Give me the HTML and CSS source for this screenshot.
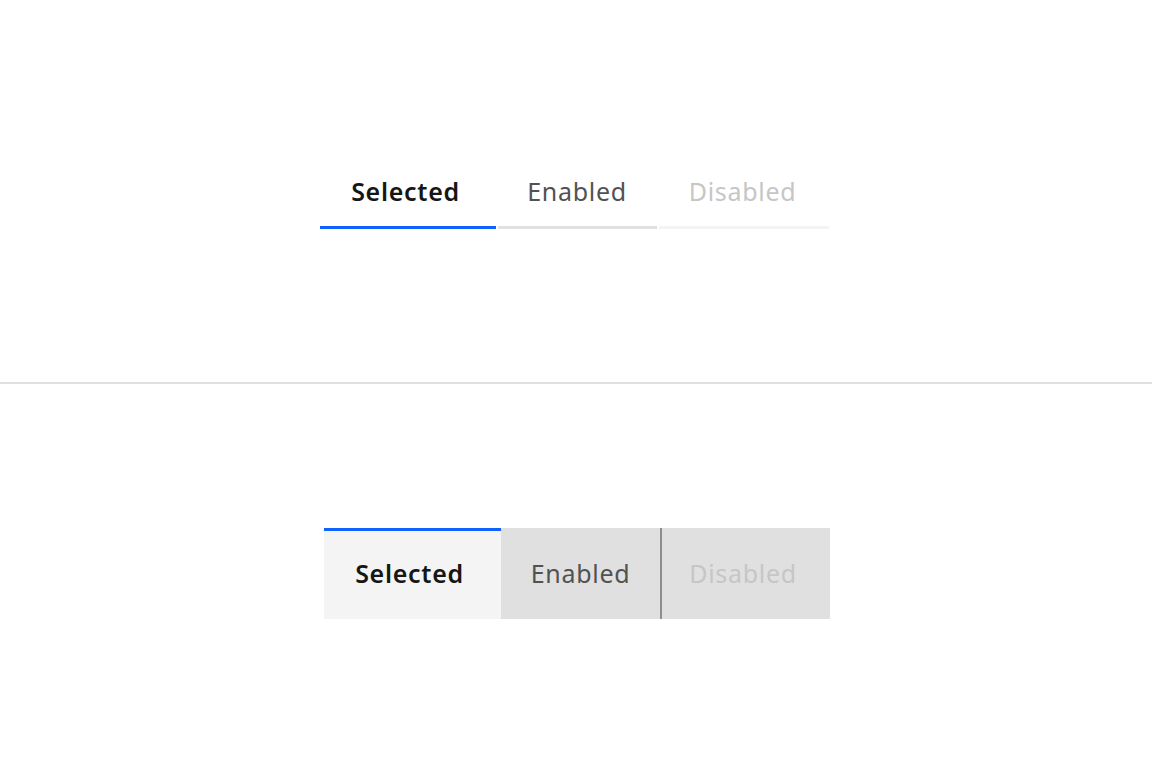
FILE: index.html
```html
<!DOCTYPE html>
<html lang="en">
<head>
  <meta charset="UTF-8">
  <title>Tabs</title>
  <link rel="stylesheet" href="styles.css">
</head>
<body>
  <section class="panel panel-top">
    <div class="tabs">
      <div class="tab tab-selected w-1">Selected</div>
      <div class="tab tab-enabled w-2">Enabled</div>
      <div class="tab tab-disabled w-3">Disabled</div>
    </div>
  </section>

  <section class="panel panel-bottom">
    <div class="tabs-contained">
      <div class="ctab ctab-selected">Selected</div>
      <div class="ctab ctab-enabled">Enabled</div>
      <div class="ctab ctab-disabled">Disabled</div>
    </div>
  </section>
</body>
</html>
```

FILE: styles.css
```css
* {
  box-sizing: border-box;
  margin: 0;
  padding: 0;
}

body {
  font-family: "Noto Sans", "Open Sans", Arial, sans-serif;
  background: #fff;
  color: #161616;
}

.panel {
  display: flex;
  justify-content: center;
  align-items: center;
  width: 100%;
}

.panel-top {
  height: 384px;
  border-bottom: 2px solid #e0e0e0;
  padding-right: 4px;
}

.panel-bottom {
  height: 381px;
  padding-left: 2px;
  padding-bottom: 2px;
}

/* Line tabs */
.tabs {
  display: flex;
  gap: 2px;
}

.tab {
  height: 76px;
  display: flex;
  align-items: center;
  justify-content: center;
  font-size: 25px;
  letter-spacing: 0.7px;
  border-bottom: 3px solid #e0e0e0;
  padding-top: 3px;
}

.w-1 { width: 176px; }
.w-2 { width: 159px; }
.w-3 { width: 170px; }

.tab-selected {
  font-weight: 600;
  color: #161616;
  border-bottom-color: #0f62fe;
  padding-right: 4px;
}

.tab-enabled {
  color: #525252;
}

.tab-disabled {
  color: #c6c6c6;
  border-bottom-color: #f4f4f4;
  padding-right: 2px;
}

/* Contained tabs */
.tabs-contained {
  display: flex;
  height: 91px;
}

.ctab {
  display: flex;
  align-items: center;
  justify-content: center;
  font-size: 25px;
  letter-spacing: 0.7px;
  background: #e0e0e0;
  padding-bottom: 2px;
}

.ctab-selected {
  width: 177px;
  background: #f4f4f4;
  border-top: 3px solid #0f62fe;
  font-weight: 600;
  color: #161616;
  padding-bottom: 4px;
  padding-right: 6px;
}

.ctab-enabled {
  width: 161px;
  color: #525252;
  border-right: 2px solid #8d8d8d;
}

.ctab-disabled {
  width: 168px;
  color: #c6c6c6;
  padding-right: 6px;
}
```
